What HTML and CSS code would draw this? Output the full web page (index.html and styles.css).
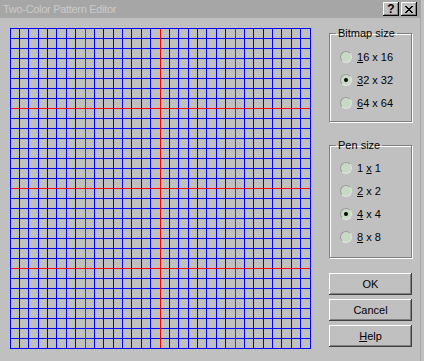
FILE: index.html
```html
<!DOCTYPE html>
<html lang="en">
<head>
  <meta charset="UTF-8" />
  <title>Two-Color Pattern Editor</title>
  <link rel="stylesheet" href="styles.css">
</head>
<body>

  <div class="titlebar">
    <span class="title">Two-Color Pattern Editor</span>
    <div class="caption-btns">
      <button class="cap-btn">?</button>
      <button class="cap-btn cap-close">
        <svg width="8" height="7" viewBox="0 0 8 7"><path d="M0 0h2v1h1v1h2v-1h1v-1h2v1h-1v1h-1v1h-1v1h1v1h1v1h1v1h-2v-1h-1v-1h-2v1h-1v1h-2v-1h1v-1h1v-1h1v-1h-1v-1h-1v-1h-1z" fill="#000"/></svg>
      </button>
    </div>
  </div>

  <div class="dialog">
    <svg class="pattern" width="301" height="321" viewBox="0 0 301 321" shape-rendering="crispEdges">
      <path stroke="#0000ff" stroke-width="1" fill="none" d="
        M0.5 0V321 M9.5 0V321 M18.5 0V321 M28.5 0V321 M37.5 0V321 M46.5 0V321 M56.5 0V321 M65.5 0V321
        M84.5 0V321 M93.5 0V321 M103.5 0V321 M112.5 0V321 M121.5 0V321 M131.5 0V321 M140.5 0V321
        M159.5 0V321 M168.5 0V321 M178.5 0V321 M187.5 0V321 M196.5 0V321 M206.5 0V321 M215.5 0V321
        M234.5 0V321 M243.5 0V321 M253.5 0V321 M262.5 0V321 M271.5 0V321 M281.5 0V321 M290.5 0V321 M300.5 0V321
        M0 0.5H301 M0 10.5H301 M0 20.5H301 M0 30.5H301 M0 40.5H301 M0 50.5H301 M0 60.5H301 M0 70.5H301
        M0 90.5H301 M0 100.5H301 M0 110.5H301 M0 120.5H301 M0 130.5H301 M0 140.5H301 M0 150.5H301
        M0 170.5H301 M0 180.5H301 M0 190.5H301 M0 200.5H301 M0 210.5H301 M0 220.5H301 M0 230.5H301
        M0 250.5H301 M0 260.5H301 M0 270.5H301 M0 280.5H301 M0 290.5H301 M0 300.5H301 M0 310.5H301 M0 320.5H301"/>
      <path stroke="#ff0000" stroke-width="1" fill="none" d="
        M75.5 1V320 M150.5 1V320 M225.5 1V320
        M1 80.5H300 M1 160.5H300 M1 240.5H300"/>
    </svg>

    <div class="side">
      <fieldset class="group group-bitmap">
        <legend>Bitmap size</legend>
        <label class="radio"><span class="dot"></span><span><u>1</u>6 x 16</span></label>
        <label class="radio checked"><span class="dot"></span><span><u>3</u>2 x 32</span></label>
        <label class="radio"><span class="dot"></span><span><u>6</u>4 x 64</span></label>
      </fieldset>

      <fieldset class="group group-pen">
        <legend>Pen size</legend>
        <label class="radio"><span class="dot"></span><span>1 <u>x</u> 1</span></label>
        <label class="radio"><span class="dot"></span><span><u>2</u> x 2</span></label>
        <label class="radio checked"><span class="dot"></span><span><u>4</u> x 4</span></label>
        <label class="radio"><span class="dot"></span><span><u>8</u> x 8</span></label>
      </fieldset>

      <div class="buttons">
        <button class="btn">OK</button>
        <button class="btn">Cancel</button>
        <button class="btn"><u>H</u>elp</button>
      </div>
    </div>
  </div>

</body>
</html>
```

FILE: styles.css
```css
body {
  margin: 0;
  padding: 0;
  width: 424px;
  height: 361px;
  overflow: hidden;
  background: #c0c0c0;
  font-family: 'Liberation Sans', Arial, sans-serif;
  font-size: 11px;
  color: #000;
}

.titlebar {
  height: 18px;
  margin-right: 3px;
  background: #a6a6a6;
  display: flex;
  align-items: center;
  justify-content: space-between;
  padding: 0 4px 0 3px;
}

.title {
  color: #cacaca;
  font-size: 11px;
  letter-spacing: -0.3px;
}

.caption-btns {
  display: flex;
  gap: 2px;
}

.cap-btn {
  width: 16px;
  height: 14px;
  padding: 0;
  border: none;
  background: #c0c0c0;
  box-shadow: inset -1px -1px #000, inset 1px 1px #fff, inset -2px -2px #808080;
  font-family: 'Liberation Sans', Arial, sans-serif;
  font-weight: bold;
  font-size: 12px;
  line-height: 14px;
  display: flex;
  align-items: center;
  justify-content: center;
}

.dialog {
  display: flex;
  width: 410px;
  height: 343px;
  padding: 10px 0 0 10px;
  border-right: 1px solid #a8a8a8;
}

.pattern {
  display: block;
  flex: none;
}

.side {
  margin-left: 18px;
  width: 83px;
  display: flex;
  flex-direction: column;
}

.group {
  margin: 0;
  padding: 11px 0 0 10px;
  border: 1px solid #808080;
  box-shadow: inset 1px 1px #fff, 1px 1px #fff;
  display: flex;
  flex-direction: column;
  gap: 10px;
}

.group legend {
  padding: 0 2px;
  margin-left: -4px;
}

.group-bitmap {
  height: 82px;
  margin-top: -1px;
}

.group-pen {
  height: 107px;
  padding-top: 10px;
  margin-top: 17px;
}

.radio {
  display: flex;
  align-items: center;
  height: 13px;
  gap: 5px;
}

.dot {
  width: 10px;
  height: 10px;
  border-radius: 50%;
  background: #c6dcc2;
  border: 1px solid;
  border-color: #9a9a9a #e2e2e2 #e2e2e2 #9a9a9a;
  position: relative;
}

.radio.checked .dot::after {
  content: '';
  position: absolute;
  left: 3px;
  top: 3px;
  width: 4px;
  height: 4px;
  border-radius: 50%;
  background: #000;
}

.buttons {
  margin-top: 15px;
  display: flex;
  flex-direction: column;
  gap: 4px;
}

.btn {
  height: 22px;
  padding: 0;
  border: none;
  background: #c0c0c0;
  box-shadow: inset -1px -1px #404040, inset 1px 1px #fff, inset -2px -2px #808080;
  font-family: 'Liberation Sans', Arial, sans-serif;
  font-size: 11px;
  color: #000;
}
```
